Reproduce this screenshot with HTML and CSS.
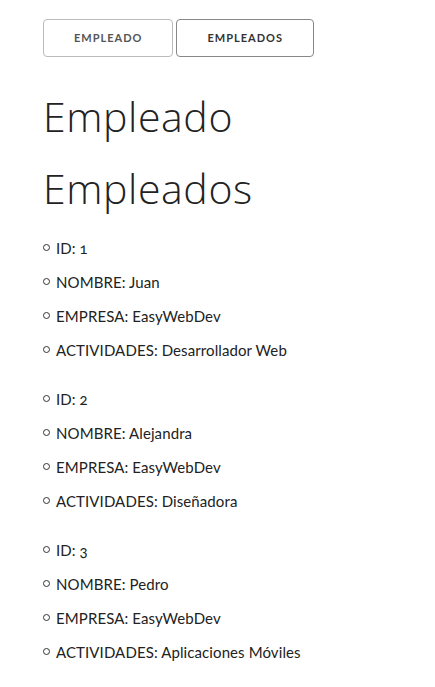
FILE: index.html
```html
<!DOCTYPE html>
<html lang="es">
<head>
<meta charset="utf-8">
<title>Empleados</title>
<link rel="stylesheet" href="styles.css">
</head>
<body>
<div class="container">
  <div class="tabs">
    <button class="button">Empleado</button>
    <button class="button active">Empleados</button>
  </div>
  <h1 class="title">Empleado</h1>
  <h1 class="title">Empleados</h1>
  <ul class="emp">
    <li>ID: 1</li>
    <li>NOMBRE: Juan</li>
    <li>EMPRESA: EasyWebDev</li>
    <li>ACTIVIDADES: Desarrollador Web</li>
  </ul>
  <ul class="emp">
    <li>ID: 2</li>
    <li>NOMBRE: Alejandra</li>
    <li>EMPRESA: EasyWebDev</li>
    <li>ACTIVIDADES: Diseñadora</li>
  </ul>
  <ul class="emp">
    <li>ID: 3</li>
    <li>NOMBRE: Pedro</li>
    <li>EMPRESA: EasyWebDev</li>
    <li>ACTIVIDADES: Aplicaciones Móviles</li>
  </ul>
</div>
</body>
</html>
```
FILE: styles.css
```css
* { box-sizing: border-box; }
html, body { margin: 0; padding: 0; background: #fff; }
body {
  font-family: Lato, "Open Sans", sans-serif;
  font-size: 15px;
  line-height: 24px;
  color: #222;
  letter-spacing: 0.1px;
  font-variant-numeric: oldstyle-nums;
}
.container {
  padding: 19px 20px 0 43px;
}
.tabs {
  display: flex;
  gap: 3px;
  margin-bottom: 35px;
}
.button {
  height: 38px;
  padding: 0 30px;
  background: transparent;
  border: 1px solid #bbb;
  border-radius: 4px;
  color: #555;
  font-family: Lato, sans-serif;
  font-size: 11px;
  font-weight: 700;
  letter-spacing: 1px;
  text-transform: uppercase;
  line-height: 36px;
  cursor: pointer;
}
.button.active {
  border-color: #888;
  color: #333;
}
.title {
  margin: 0 0 24px 0;
  font-family: "Open Sans", Lato, sans-serif;
  font-size: 41px;
  line-height: 48px;
  font-weight: 300;
  letter-spacing: 0.6px;
}
.emp {
  list-style: none;
  margin: 0 0 25px 0;
  padding: 0;
}
.emp li {
  margin: 0 0 10px 0;
}
.emp li::before {
  content: "";
  display: inline-block;
  width: 5px;
  height: 5px;
  border: 1px solid #333;
  border-radius: 50%;
  margin: 0 6px 3px 0;
}
```
